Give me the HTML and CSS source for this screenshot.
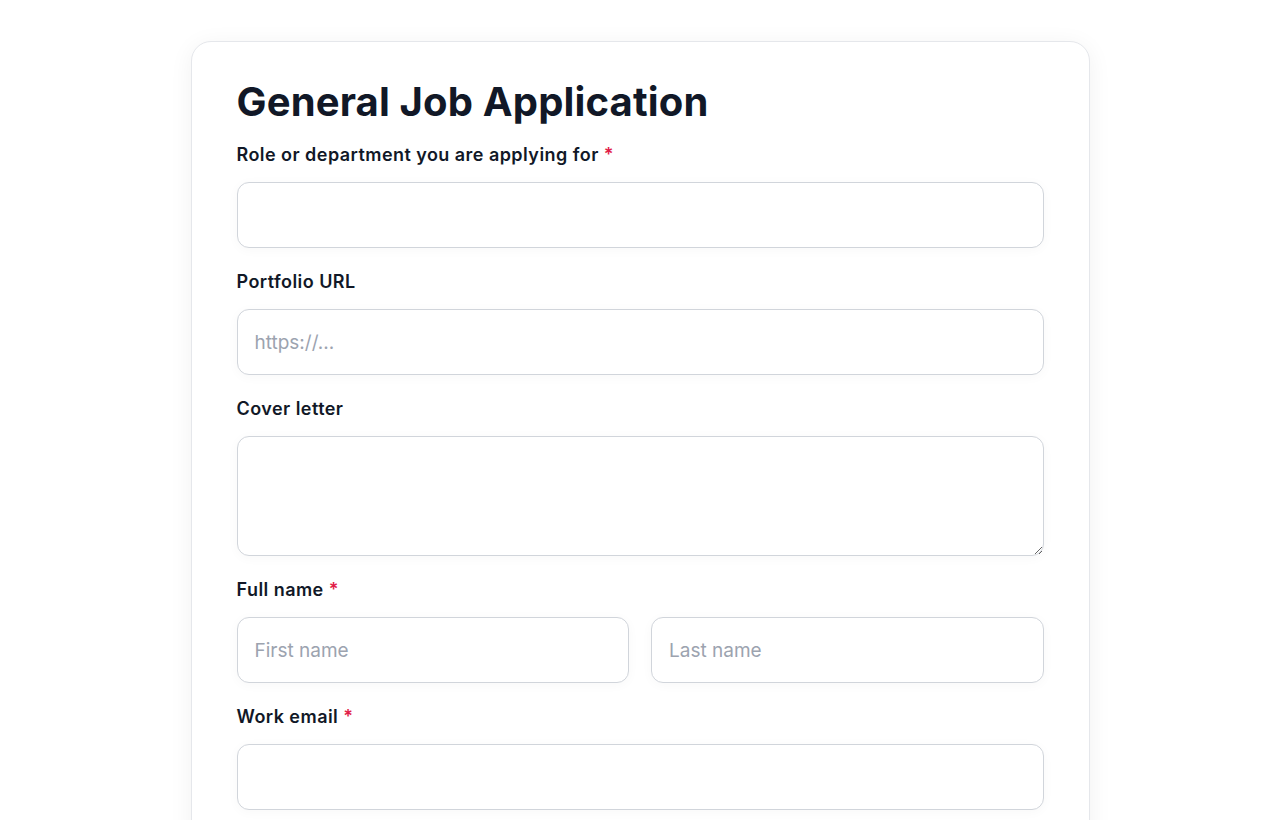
FILE: index.html
```html
<!DOCTYPE html>
<html lang="en">
<head>
  <meta charset="UTF-8">
  <title>General Job Application</title>
  <meta name="viewport" content="width=device-width, initial-scale=1.0">
  <link rel="stylesheet" href="styles.css">
</head>
<body>
  <div class="card">
    <h1>General Job Application</h1>

    <form class="form">
      <div class="field">
        <label for="role">Role or department you are applying for <span class="req">*</span></label>
        <input type="text" id="role">
      </div>

      <div class="field">
        <label for="portfolio">Portfolio URL</label>
        <input type="text" id="portfolio" placeholder="https://...">
      </div>

      <div class="field">
        <label for="cover">Cover letter</label>
        <textarea id="cover"></textarea>
      </div>

      <div class="field">
        <label for="first">Full name <span class="req">*</span></label>
        <div class="row">
          <input type="text" id="first" placeholder="First name">
          <input type="text" id="last" placeholder="Last name">
        </div>
      </div>

      <div class="field">
        <label for="email">Work email <span class="req">*</span></label>
        <input type="email" id="email">
      </div>
    </form>
  </div>
</body>
</html>
```

FILE: styles.css
```css
/* Basic Reset */
* {
  box-sizing: border-box;
  margin: 0;
  padding: 0;
  font-family: Inter, "Open Sans", sans-serif;
}

body {
  background: #fff;
  color: #111827;
  padding: 41px 20px;
}

.card {
  max-width: 899px;
  margin: 0 auto;
  background: #fff;
  border: 1px solid #e5e7eb;
  border-radius: 20px;
  box-shadow: 0 4px 24px rgba(17, 24, 39, 0.06);
  padding: 34px 45px 40px;
}

h1 {
  font-size: 40px;
  font-weight: 700;
  line-height: 52px;
  letter-spacing: 0.15px;
  margin-bottom: 15px;
}

.form {
  display: flex;
  flex-direction: column;
  gap: 22px;
}

.field label {
  display: block;
  font-size: 18px;
  font-weight: 600;
  line-height: 24px;
  letter-spacing: 0.45px;
  margin-bottom: 15px;
}

.req {
  color: #e11d48;
}

input,
textarea {
  width: 100%;
  height: 66px;
  padding: 0 17px;
  font-size: 19px;
  color: #111827;
  background: #fff;
  border: 1px solid #d1d5db;
  border-radius: 12px;
  box-shadow: 0 2px 12px rgba(17, 24, 39, 0.03);
  outline: none;
}

textarea {
  display: block;
  height: 120px;
  padding: 14px 17px;
  resize: vertical;
}

input::placeholder {
  color: #9ca3af;
}

.row {
  display: grid;
  grid-template-columns: 1fr 1fr;
  gap: 22px;
}
```
